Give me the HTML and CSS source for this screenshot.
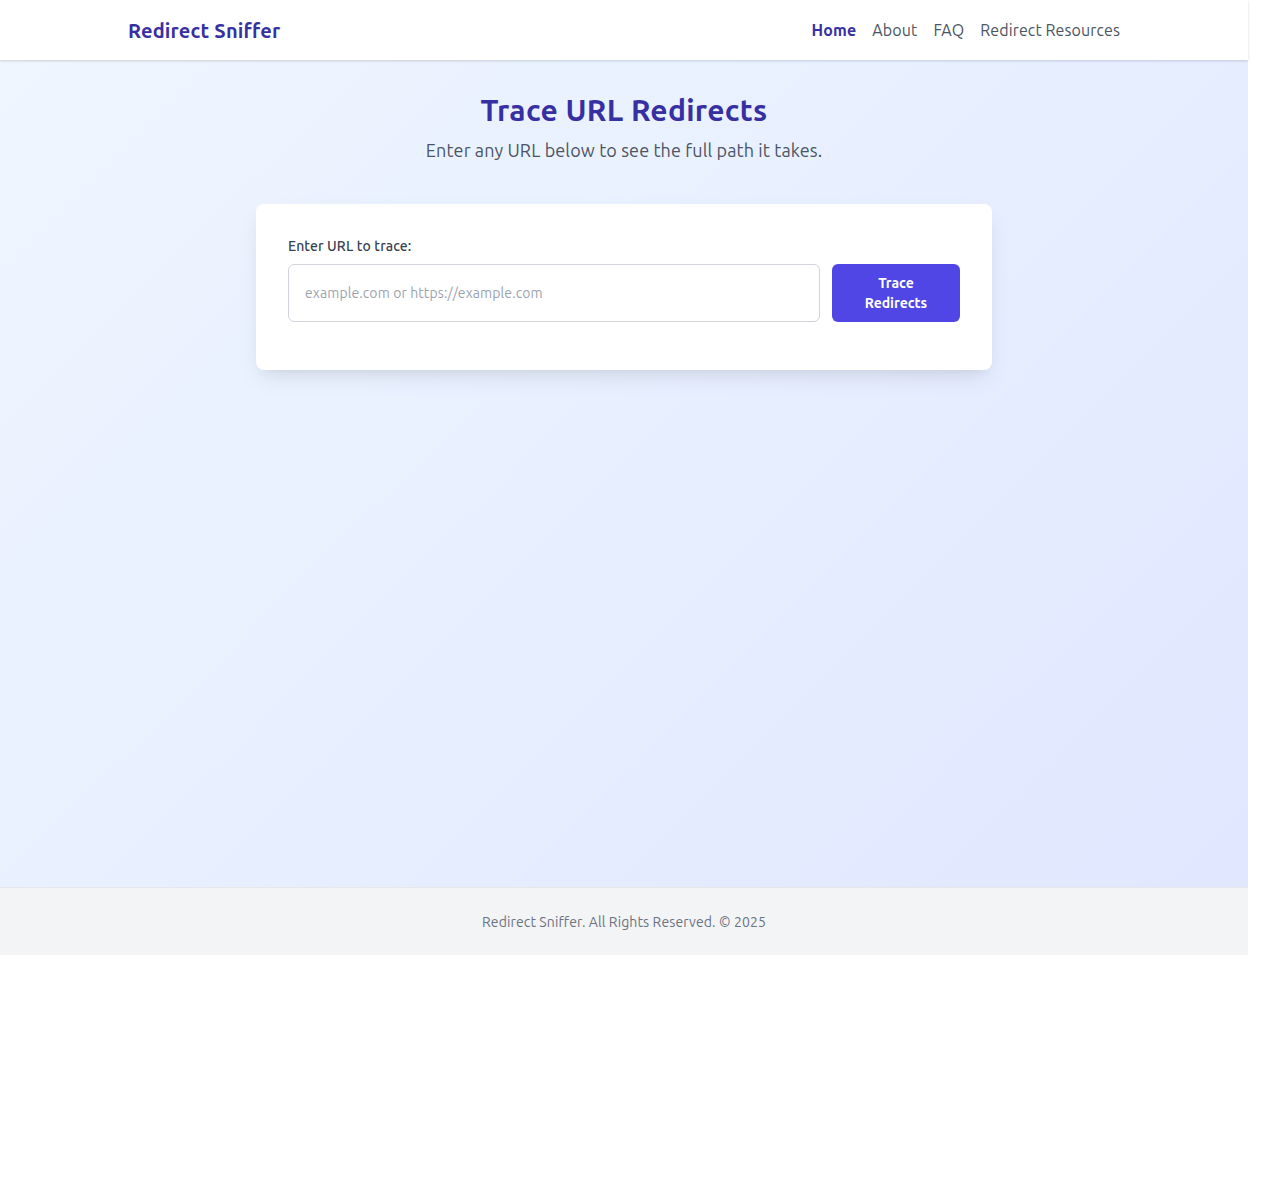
FILE: index.html
```html
<!DOCTYPE html>
<html lang="en">
<head>
<meta charset="utf-8">
<title>Redirect Sniffer</title>
<link rel="stylesheet" href="styles.css">
</head>
<body>
<div class="page">
  <header class="site-header">
    <div class="container header-inner">
      <a class="logo" href="#">Redirect Sniffer</a>
      <nav class="nav">
        <a class="nav-link active" href="#">Home</a>
        <a class="nav-link" href="#">About</a>
        <a class="nav-link" href="#">FAQ</a>
        <a class="nav-link" href="#">Redirect Resources</a>
      </nav>
    </div>
  </header>
  <main class="main">
    <h1 class="title">Trace URL Redirects</h1>
    <p class="subtitle">Enter any URL below to see the full path it takes.</p>
    <section class="card">
      <form class="form">
        <label class="label" for="url">Enter URL to trace:</label>
        <div class="row">
          <input class="input" id="url" type="text" placeholder="example.com or https://example.com">
          <button class="button" type="button">Trace Redirects</button>
        </div>
      </form>
    </section>
  </main>
  <footer class="footer">
    <p class="footer-text">Redirect Sniffer. All Rights Reserved. © 2025</p>
  </footer>
</div>
</body>
</html>
```
FILE: styles.css
```css
* { box-sizing: border-box; }
html, body { margin: 0; padding: 0; background: #ffffff; }
body {
  font-family: Ubuntu, "Open Sans", "Noto Sans", sans-serif;
  color: #1f2937;
  letter-spacing: 0.007em;
}
.page { width: 1248px; }
.container { max-width: 1024px; margin: 0 auto; padding: 0 16px; }
.site-header {
  background: #ffffff;
  height: 60px;
  box-shadow: 0 1px 3px rgba(0,0,0,0.1), 0 1px 2px rgba(0,0,0,0.06);
  position: relative;
  z-index: 1;
}
.header-inner {
  height: 60px;
  display: flex;
  align-items: center;
  justify-content: space-between;
}
.logo {
  font-size: 20px;
  font-weight: 700;
  color: #3730a3;
  text-decoration: none;
  letter-spacing: 0.01em;
}
.nav { display: flex; gap: 16px; }
.nav-link {
  font-size: 16px;
  color: #4b5563;
  text-decoration: none;
}
.nav-link.active { color: #3730a3; font-weight: 700; letter-spacing: 0.01em; }
.main {
  height: 827px;
  background: linear-gradient(135deg, #eff6ff 0%, #e0e7ff 100%);
  padding-top: 32px;
  display: flex;
  flex-direction: column;
  align-items: center;
}
.title {
  margin: 0;
  font-size: 30px;
  line-height: 36px;
  font-weight: 700;
  color: #3730a3;
  letter-spacing: 0.01em;
}
.subtitle {
  margin: 8px 0 0;
  font-size: 18px;
  line-height: 28px;
  color: #4b5563;
}
.card {
  margin-top: 40px;
  width: 736px;
  background: #ffffff;
  border-radius: 8px;
  padding: 32px 32px 48px;
  box-shadow: 0 10px 25px -5px rgba(0,0,0,0.1), 0 8px 10px -6px rgba(0,0,0,0.05);
}
.form { display: flex; flex-direction: column; gap: 8px; }
.label {
  font-size: 14px;
  line-height: 20px;
  font-weight: 500;
  color: #374151;
}
.row { display: flex; gap: 12px; }
.input {
  flex: 1;
  height: 58px;
  border: 1px solid #d1d5db;
  border-radius: 6px;
  padding: 16px;
  font-family: inherit;
  font-size: 14px;
  letter-spacing: 0.007em;
  color: #1f2937;
  background: #ffffff;
}
.input::placeholder { color: #9ca3af; }
.button {
  width: 128px;
  height: 58px;
  border: none;
  border-radius: 6px;
  background: #4f46e5;
  color: #ffffff;
  font-family: inherit;
  font-size: 14px;
  line-height: 20px;
  font-weight: 600;
  padding: 0 24px;
}
.footer {
  height: 68px;
  background: #f3f4f6;
  border-top: 1px solid #e5e7eb;
  display: flex;
  align-items: center;
  justify-content: center;
}
.footer-text {
  margin: 0;
  font-size: 14px;
  line-height: 20px;
  color: #6b7280;
}
```
